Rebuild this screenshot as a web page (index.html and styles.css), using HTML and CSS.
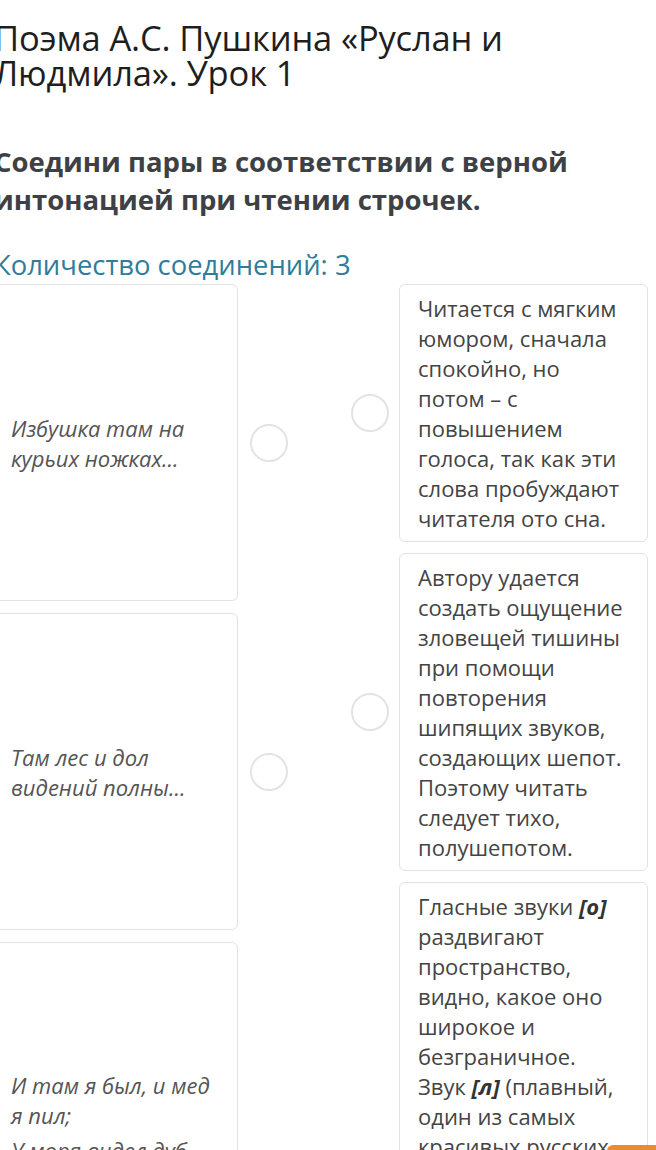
FILE: index.html
```html
<!DOCTYPE html>
<html lang="ru">
<head>
<meta charset="utf-8">
<title>Руслан и Людмила</title>
<link rel="stylesheet" href="styles.css">
</head>
<body>
<div class="page">
  <h1 class="title">Поэма А.С. Пушкина «Руслан и Людмила». Урок 1</h1>
  <h2 class="task">Соедини пары в соответствии с верной интонацией при чтении строчек.</h2>
  <div class="count">Количество соединений: 3</div>
  <div class="match">
    <div class="col col-left">
      <div class="row">
        <div class="card card-left h1">
          <div class="ltext"><p>Избушка там на курьих ножках...</p></div>
        </div>
        <span class="dot"></span>
      </div>
      <div class="row">
        <div class="card card-left h1">
          <div class="ltext"><p>Там лес и дол видений полны...</p></div>
        </div>
        <span class="dot"></span>
      </div>
      <div class="row">
        <div class="card card-left h3">
          <div class="ltext">
            <p>И там я был, и мед я пил;</p>
            <p>У моря видел дуб зеленый;</p>
            <p>Под ним сидел, и кот ученый</p>
            <p>Свои мне сказки говорил.</p>
          </div>
        </div>
        <span class="dot"></span>
      </div>
    </div>
    <div class="col col-right">
      <div class="row">
        <span class="dot"></span>
        <div class="card card-right">Читается с мягким юмором, сначала спокойно, но потом – с повышением голоса, так как эти слова пробуждают читателя ото сна.</div>
      </div>
      <div class="row">
        <span class="dot"></span>
        <div class="card card-right">Автору удается создать ощущение зловещей тишины при помощи повторения шипящих звуков, создающих шепот. Поэтому читать следует тихо, полушепотом.</div>
      </div>
      <div class="row">
        <span class="dot"></span>
        <div class="card card-right">Гласные звуки <b><i>[о]</i></b> раздвигают пространство, видно, какое оно широкое и безграничное. Звук <b><i>[л]</i></b> (плавный, один из самых красивых русских звуков) придает строкам плавность, мелодичность, напевность. Поэтому читать эти строки следует спокойно, неторопливо, с восхищением, как бы любуясь красотой сказочного мира.</div>
      </div>
    </div>
  </div>
</div>
<div class="fab"></div>
</body>
</html>
```
FILE: styles.css
```css
html, body {
  margin: 0;
  padding: 0;
  background: #ffffff;
}
body {
  font-family: "Open Sans", "Noto Sans", sans-serif;
  overflow: hidden;
}
.page {
  margin-left: -6px;
  width: 654px;
}
.title {
  margin: 20px 0 0 0;
  font-size: 34.5px;
  line-height: 35px;
  font-weight: 400;
  color: #1e1e1e;
  letter-spacing: -0.15px;
}
.task {
  margin: 53px 0 0 0;
  font-size: 27.5px;
  line-height: 38px;
  font-weight: 700;
  color: #3d4145;
}
.count {
  margin-top: 29px;
  font-size: 27.4px;
  line-height: 34px;
  color: #2e7d9a;
}
.match {
  display: flex;
  justify-content: space-between;
  margin-top: 2px;
}
.col {
  display: flex;
  flex-direction: column;
}
.col-left {
  width: 294px;
  gap: 12px;
}
.col-right {
  width: 297px;
  gap: 11px;
}
.row {
  display: flex;
  align-items: center;
}
.col-left .row { gap: 12px; }
.col-right .row { gap: 10px; }
.dot {
  flex: none;
  width: 34px;
  height: 34px;
  border: 2px solid #e3e3e3;
  border-radius: 50%;
}
.card {
  box-sizing: border-box;
  border: 1px solid #e2e2e2;
  border-radius: 6px;
  background: #fff;
}
.card-left {
  width: 246px;
  padding: 0 16px;
  display: flex;
  align-items: center;
}
.card-left.h1 { height: 317px; }
.card-left.h3 { height: 511px; }
.ltext p {
  margin: 0 0 5px 0;
  font-style: italic;
  font-size: 22px;
  line-height: 30px;
  color: #555555;
}
.ltext p:last-child { margin-bottom: 0; }
.card-right {
  width: 249px;
  padding: 8px 22px 8px 18px;
  font-size: 22px;
  line-height: 30px;
  color: #444444;
}
.card-right b { color: #333; }
.fab {
  position: fixed;
  right: 0;
  bottom: -40px;
  width: 49px;
  height: 45px;
  background: #ef8a2b;
  border-top-left-radius: 6px;
}
```
